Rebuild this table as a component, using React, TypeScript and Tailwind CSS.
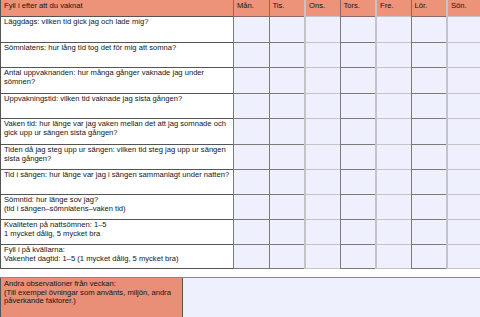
import React from "react";

const rows: { lines: string[]; h: string }[] = [
  { lines: ["Läggdags: vilken tid gick jag och lade mig?"], h: "h-[26px]" },
  { lines: ["Sömnlatens: hur lång tid tog det för mig att somna?"], h: "h-[25px]" },
  { lines: ["Antal uppvaknanden: hur många gånger vaknade jag under", "sömnen?"], h: "h-[26px]" },
  { lines: ["Uppvakningstid: vilken tid vaknade jag sista gången?"], h: "h-[25px]" },
  { lines: ["Vaken tid: hur länge var jag vaken mellan det att jag somnade och", "gick upp ur sängen sista gången?"], h: "h-[26px]" },
  { lines: ["Tiden då jag steg upp ur sängen: vilken tid steg jag upp ur sängen", "sista gången?"], h: "h-[25px]" },
  { lines: ["Tid i sängen: hur länge var jag i sängen sammanlagt under natten?"], h: "h-[25px]" },
  { lines: ["Sömntid: hur länge sov jag?", "(tid i sängen–sömnlatens–vaken tid)"], h: "h-[25px]" },
  { lines: ["Kvaliteten på nattsömnen: 1–5", "1 mycket dålig, 5 mycket bra"], h: "h-[25px]" },
  { lines: ["Fyll i på kvällarna:", "Vakenhet dagtid: 1–5 (1 mycket dålig, 5 mycket bra)"], h: "h-[24px]" },
];

const days = ["Mån.", "Tis.", "Ons.", "Tors.", "Fre.", "Lör.", "Sön."];
const colBorder = [
  "border-l border-[#6b6b6b]",
  "border-l border-[#6b6b6b]",
  "border-l-2 border-[#c4c4c8]",
  "border-l border-[#6b6b6b]",
  "border-l-2 border-[#c4c4c8]",
  "border-l border-[#6b6b6b]",
  "border-l-2 border-[#c4c4c8]",
];

export default function App() {
  return (
    <div
      className="w-[480px] h-[317px] overflow-hidden bg-white text-[7.6px] leading-[8.5px] text-[#151515]"
      style={{ fontFamily: '"Liberation Sans", Arial, sans-serif' }}
    >
      <div className="grid grid-cols-[233px_repeat(7,35.5px)] w-[481.5px]">
        <div className="h-[17px] bg-[#ec9379] border-l border-[#555] border-b border-[#8a6a60] pl-[3px] pt-[2px]">
          Fyll i efter att du vaknat
        </div>
        {days.map((d, i) => (
          <div
            key={d}
            className={`h-[17px] bg-[#ec9379] border-b border-[#8a6a60] pl-[3px] pt-[2px] ${colBorder[i]}`}
          >
            {d}
          </div>
        ))}
        {rows.map((r, ri) => (
          <React.Fragment key={ri}>
            <div className={`${r.h} bg-white border-l border-[#555] border-b border-[#7a7a7a] pl-[3px] pt-px`}>
              {r.lines.map((l, li) => (
                <div key={li}>{l}</div>
              ))}
            </div>
            {days.map((d, i) => (
              <div
                key={d}
                className={`${r.h} bg-[#eef1fd] border-b border-[#7a7a7a] ${colBorder[i]}`}
              />
            ))}
          </React.Fragment>
        ))}
      </div>
      <div className="h-[8px]" />
      <div className="flex h-[40px] border-t border-[#8a8a8a]">
        <div className="w-[183px] shrink-0 bg-[#ea8f77] border-l border-[#555] border-r border-[#8a8a8a] pl-[3px] pt-[2px]">
          <div>Andra observationer från veckan:</div>
          <div>(Till exempel övningar som använts, miljön, andra</div>
          <div>påverkande faktorer.)</div>
        </div>
        <div className="flex-1 bg-[#eef1fd]" />
      </div>
    </div>
  );
}
